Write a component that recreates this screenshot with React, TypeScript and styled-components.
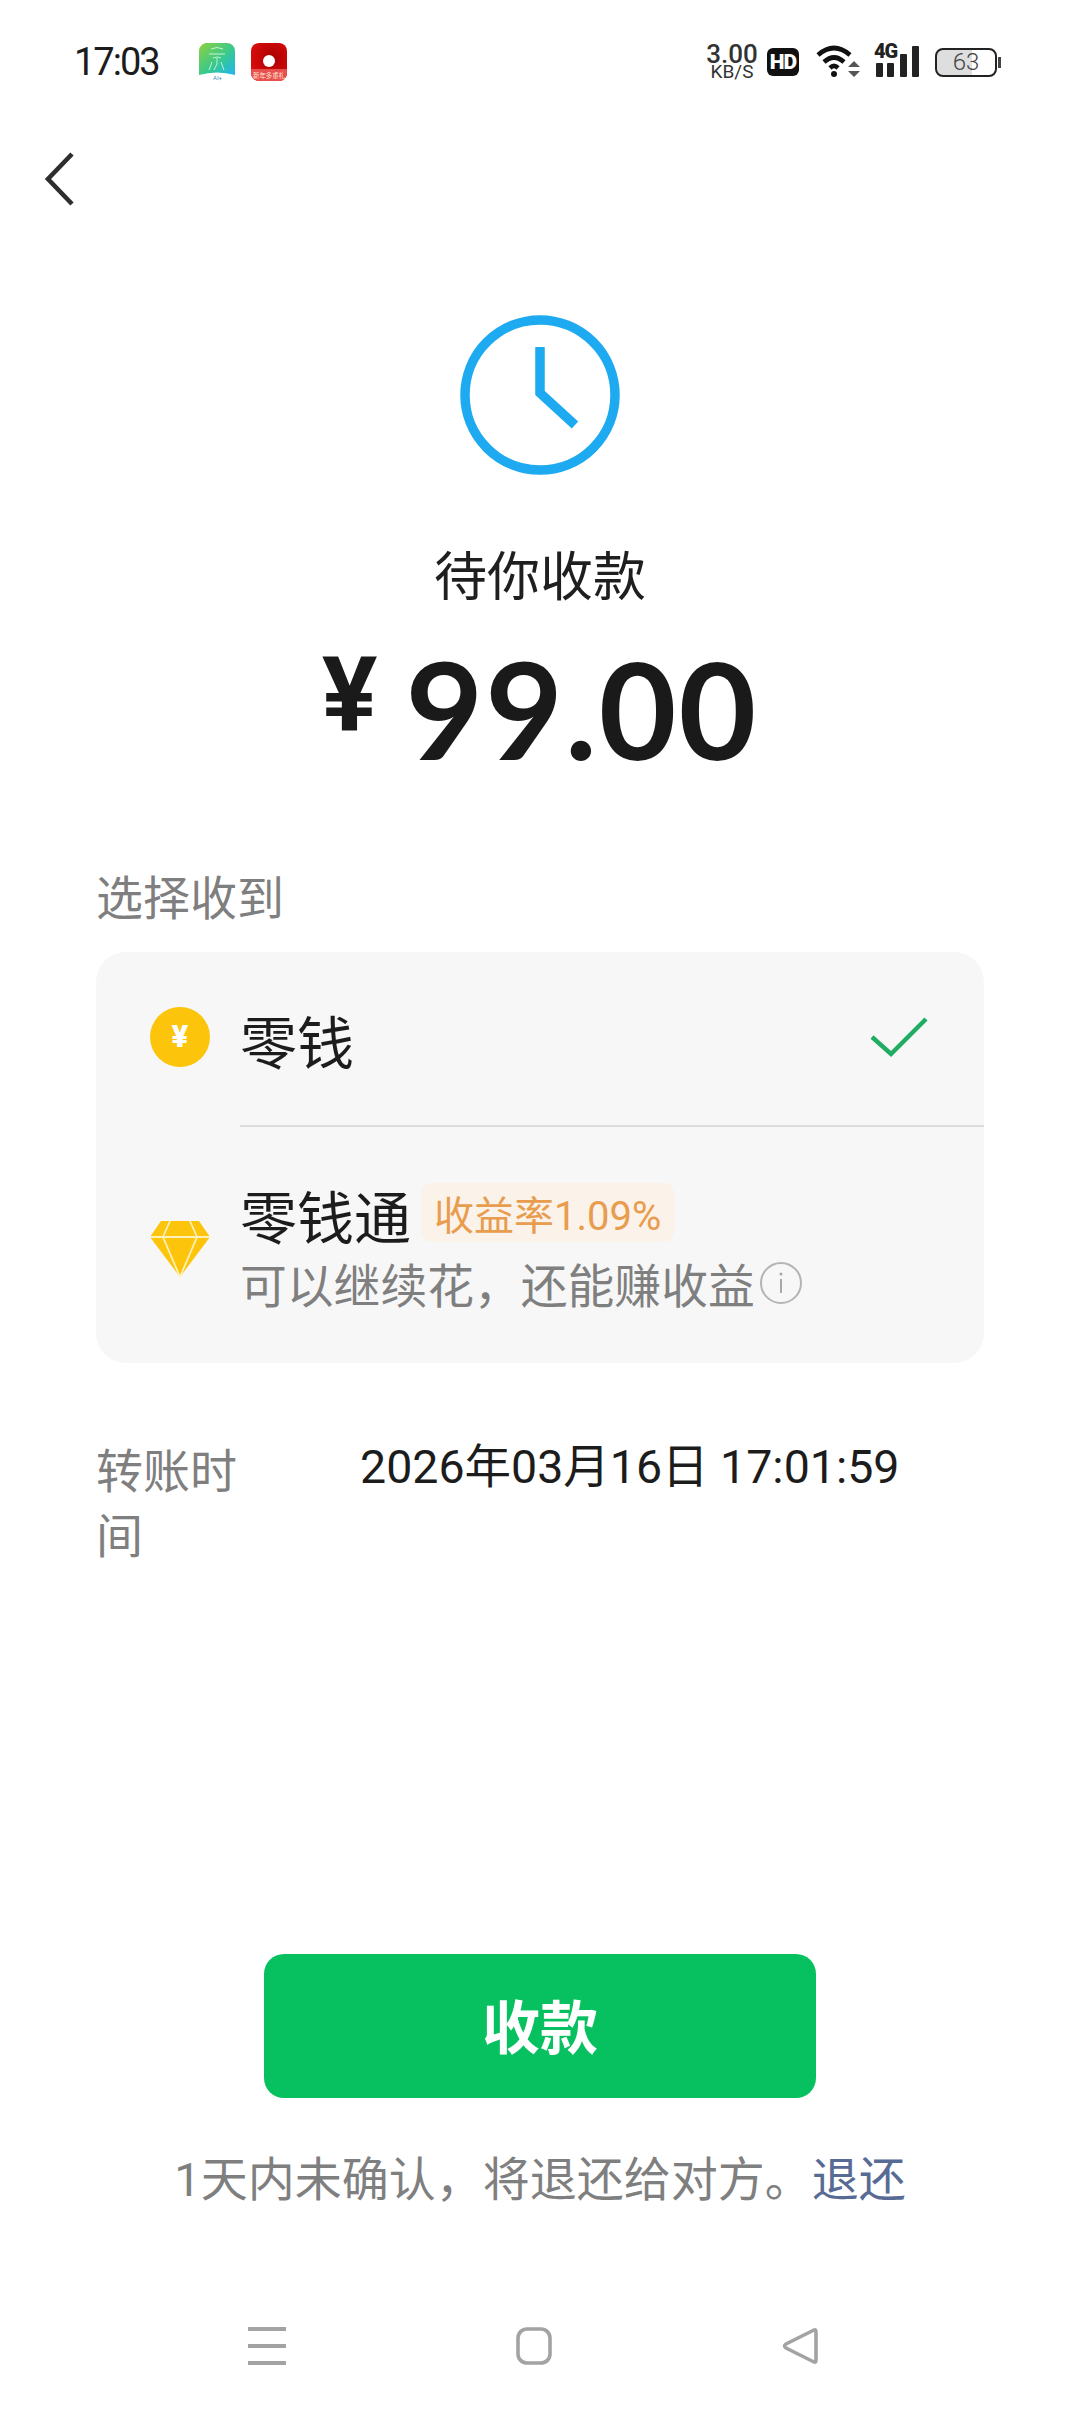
import React from 'react'
import styled, { createGlobalStyle } from 'styled-components'

const CJK = `"Noto Sans CJK SC", "Noto Sans", sans-serif`
const LATIN_CJK = `Roboto, "Noto Sans CJK SC", sans-serif`

const GlobalStyle = createGlobalStyle`
  html, body {
    margin: 0;
    padding: 0;
    background: #fff;
  }
  body {
    font-family: ${LATIN_CJK};
    color: #1a1a1a;
  }
`

const Page = styled.div`
  width: 1080px;
  height: 2412px;
  display: flex;
  flex-direction: column;
  overflow: hidden;
  background: #fff;
`

const StatusBar = styled.div`
  height: 80px;
  margin-top: 22px;
  padding: 0 79px 0 74px;
  display: flex;
  align-items: center;
  justify-content: space-between;
`

const StatusLeft = styled.div`
  display: flex;
  align-items: center;
`

const Clock = styled.span`
  font-size: 38px;
  line-height: 1;
  width: 125px;
  letter-spacing: -2px;
  color: #1c1c1c;
`

const AppIcon = styled.svg`
  width: 37px;
  height: 38px;
  margin-right: 15px;
`

const StatusRight = styled.div`
  display: flex;
  align-items: center;
`

const Speed = styled.div`
  display: flex;
  flex-direction: column;
  align-items: center;
  width: 52px;
  color: #333;
  margin-right: 9px;
`

const SpeedValue = styled.span`
  font-size: 26px;
  line-height: 20px;
  font-weight: 500;
`

const SpeedUnit = styled.span`
  font-size: 19px;
  line-height: 16px;
`

const HdBadge = styled.span`
  width: 32px;
  height: 28px;
  border-radius: 6px;
  background: #111;
  color: #fff;
  font-size: 21px;
  font-weight: 900;
  line-height: 28px;
  text-align: center;
  letter-spacing: -1px;
  margin-right: 17px;
`

const WifiIcon = styled.svg`
  width: 46px;
  height: 36px;
  margin-right: 12px;
`

const SignalBox = styled.div`
  width: 46px;
  height: 36px;
  position: relative;
  margin-right: 15px;
`

const SignalLabel = styled.span`
  position: absolute;
  left: 0;
  top: -3px;
  font-size: 20px;
  line-height: 20px;
  font-weight: 900;
  letter-spacing: -1px;
  color: #222;
`

const SignalBars = styled.svg`
  width: 46px;
  height: 36px;
`

const Battery = styled.div`
  width: 58px;
  height: 25px;
  border: 2.5px solid #222;
  border-radius: 8px;
  box-sizing: content-box;
  overflow: hidden;
  display: flex;
  align-items: center;
  justify-content: center;
  font-size: 24px;
  font-weight: 300;
  color: #444;
  background: linear-gradient(to right, #dedede 60%, #fff 60%);
`

const BatteryCap = styled.span`
  width: 3px;
  height: 11px;
  margin-left: 1px;
  background: #444;
`

const Header = styled.div`
  height: 213px;
  padding: 49px 0 0 44px;
  box-sizing: border-box;
`

const BackIcon = styled.svg`
  display: block;
  width: 30px;
  height: 56px;
`

const Hero = styled.div`
  display: flex;
  flex-direction: column;
  align-items: center;
`

const ClockIcon = styled.svg`
  width: 160px;
  height: 160px;
`

const HeroTitle = styled.div`
  margin-top: 62px;
  font-family: ${CJK};
  font-size: 53px;
  line-height: 72px;
  color: #1f1f1f;
`

const Amount = styled.div`
  margin-top: 20px;
  height: 160px;
  display: flex;
  align-items: center;
  justify-content: center;
  color: #1a1a1a;
`

const Yen = styled.span`
  font-family: Roboto, sans-serif;
  font-size: 104px;
  font-weight: 700;
  line-height: 1;
  margin-right: 28px;
  margin-bottom: 28px;
`

const Digits = styled.span`
  font-family: Lato, Roboto, sans-serif;
  font-size: 134px;
  font-weight: 700;
  line-height: 160px;
  letter-spacing: 2px;
`

const Main = styled.div`
  margin-top: 76px;
  padding: 0 96px;
  display: flex;
  flex-direction: column;
`

const SectionLabel = styled.div`
  font-family: ${CJK};
  font-size: 47px;
  line-height: 60px;
  color: #7f7f7f;
`

const Card = styled.div`
  margin-top: 27px;
  background: #f7f7f7;
  border-radius: 30px;
  overflow: hidden;
`

const Option = styled.div<{ $height: number }>`
  display: flex;
  height: ${({ $height }) => $height}px;
`

const OptionIcon = styled.div`
  width: 144px;
  padding-left: 54px;
  box-sizing: border-box;
  display: flex;
  align-items: center;
`

const OptionBody = styled.div<{ $divider?: boolean }>`
  flex: 1;
  display: flex;
  align-items: center;
  justify-content: space-between;
  padding-right: 56px;
  border-bottom: ${({ $divider }) => ($divider ? '2px solid #dcdcdc' : 'none')};
`

const Coin = styled.div`
  width: 60px;
  height: 60px;
  margin-bottom: 6px;
  border-radius: 50%;
  background: #fcc40a;
  color: #fff;
  display: flex;
  align-items: center;
  justify-content: center;
  font-family: Roboto, sans-serif;
  font-size: 31px;
  font-weight: 900;
`

const Gem = styled.svg`
  width: 60px;
  height: 56px;
  margin-top: 8px;
`

const OptionTitle = styled.div`
  font-family: ${CJK};
  font-size: 57px;
  line-height: 70px;
  color: #1c1c1c;
`

const OptionStack = styled.div`
  display: flex;
  flex-direction: column;
  margin-top: 6px;
`

const TitleRow = styled.div`
  display: flex;
  align-items: center;
`

const Rate = styled.span`
  margin-left: 10px;
  height: 59px;
  margin-top: -3px;
  padding: 0 13px;
  display: flex;
  align-items: center;
  border-radius: 10px;
  background: #fbf2e9;
  color: #e89d4e;
  font-size: 40px;
  font-family: ${LATIN_CJK};
`

const OptionHint = styled.div`
  display: flex;
  align-items: center;
  font-family: ${CJK};
  font-size: 46.8px;
  line-height: 68px;
  color: #7f7f7f;
`

const InfoIcon = styled.svg`
  width: 44px;
  height: 44px;
  margin-left: 4px;
`

const CheckIcon = styled.svg`
  width: 58px;
  height: 42px;
  margin-top: -4px;
`

const DetailRow = styled.div`
  margin-top: 72px;
  display: grid;
  grid-template-columns: 141px 1fr;
  column-gap: 123px;
`

const DetailLabel = styled.div`
  font-family: ${CJK};
  font-size: 47px;
  line-height: 65px;
  color: #7f7f7f;
`

const DetailValue = styled.div`
  font-size: 46.5px;
  line-height: 65px;
  color: #1c1c1c;
  white-space: nowrap;
`

const Footer = styled.div`
  margin-top: auto;
  padding-bottom: 20px;
  display: flex;
  flex-direction: column;
  align-items: center;
`

const AcceptButton = styled.button`
  width: 552px;
  height: 144px;
  padding: 0 0 4px;
  border: 0;
  border-radius: 20px;
  background: #07c160;
  color: #fff;
  font-family: ${CJK};
  font-size: 58px;
  font-weight: 700;
`

const Notice = styled.div`
  margin-top: 48px;
  font-size: 47px;
  line-height: 68px;
  color: #7f7f7f;
  white-space: nowrap;
`

const NoticeLink = styled.a`
  color: #576b95;
`

const NavBar = styled.div`
  margin-top: 86px;
  height: 92px;
  width: 100%;
  padding: 0 261px 0 248px;
  box-sizing: border-box;
  display: flex;
  align-items: center;
  justify-content: space-between;
`

const NavIcon = styled.svg`
  width: 38px;
  height: 38px;
`

export default function App() {
  return (
    <Page>
      <GlobalStyle />
      <StatusBar>
        <StatusLeft>
          <Clock>17:03</Clock>
          <AppIcon viewBox="0 0 37 38">
            <defs>
              <linearGradient id="aiGrad" x1="0" y1="0" x2="1" y2="1">
                <stop offset="0" stopColor="#8fd13f" />
                <stop offset="0.55" stopColor="#38c98c" />
                <stop offset="1" stopColor="#1fb6f2" />
              </linearGradient>
            </defs>
            <path d="M9 0h19a8 8 0 0 1 8 8v24q-18-5-36 0V8a8 8 0 0 1 9-8z" fill="url(#aiGrad)" />
            <g fill="none" stroke="#e6fbe8" strokeWidth="0.8">
              <path d="M12 6q6-3 12 0M10 11h16M14 15q4-2 8 0M18 15v6M13 19l-3 8M18 21l-3 6M22 19l3 8" />
            </g>
            <text x="18.5" y="37" fontSize="6" textAnchor="middle" fill="#3a8fbf">AI+</text>
          </AppIcon>
          <AppIcon viewBox="0 0 37 38">
            <defs>
              <radialGradient id="redGrad" cx="0.6" cy="0.4" r="0.7">
                <stop offset="0" stopColor="#a80000" />
                <stop offset="1" stopColor="#e00d0d" />
              </radialGradient>
            </defs>
            <rect width="36" height="38" rx="8" fill="url(#redGrad)" />
            <path d="M0 26h36v4a8 8 0 0 1-8 8H8a8 8 0 0 1-8-8z" fill="#e8504f" />
            <circle cx="18" cy="18" r="6" fill="#fff" />
            <text x="18" y="35" fontSize="6.4" textAnchor="middle" fill="#ffe7d0" fontFamily={CJK}>新年多重礼</text>
          </AppIcon>
        </StatusLeft>
        <StatusRight>
          <Speed>
            <SpeedValue>3.00</SpeedValue>
            <SpeedUnit>KB/S</SpeedUnit>
          </Speed>
          <HdBadge>HD</HdBadge>
          <WifiIcon viewBox="0 0 46 36">
            <path d="M2 11q16-14 32 0M8 18q10-9 20 0M14 24q4-4 8 0" fill="none" stroke="#111" strokeWidth="4.6" />
            <circle cx="18" cy="30" r="3" fill="#111" />
            <path d="M38 17l6 6H32zM38 33l6-6H32z" fill="#555" />
          </WifiIcon>
          <SignalBox>
            <SignalLabel>4G</SignalLabel>
            <SignalBars viewBox="0 0 46 36">
              <rect x="2" y="19" width="7" height="14" rx="1" fill="#222" />
              <rect x="13" y="19" width="7" height="14" rx="1" fill="#222" />
              <rect x="26" y="10" width="7" height="23" rx="1" fill="#222" />
              <rect x="38" y="2" width="7" height="31" rx="1" fill="#222" />
            </SignalBars>
          </SignalBox>
          <Battery>63</Battery>
          <BatteryCap />
        </StatusRight>
      </StatusBar>

      <Header>
        <BackIcon viewBox="0 0 30 56">
          <path d="M28 3L4 28l24 25" fill="none" stroke="#2e2e2e" strokeWidth="4.6" />
        </BackIcon>
      </Header>

      <Hero>
        <ClockIcon viewBox="0 0 160 160">
          <circle cx="80" cy="80" r="75" fill="none" stroke="#1eaaf1" strokeWidth="9.5" />
          <path d="M80 32v46l35 32" fill="none" stroke="#1eaaf1" strokeWidth="9.5" />
        </ClockIcon>
        <HeroTitle>待你收款</HeroTitle>
        <Amount>
          <Yen>¥</Yen>
          <Digits>99.00</Digits>
        </Amount>
      </Hero>

      <Main>
        <SectionLabel>选择收到</SectionLabel>
        <Card>
          <Option $height={175}>
            <OptionIcon>
              <Coin>¥</Coin>
            </OptionIcon>
            <OptionBody $divider>
              <OptionTitle>零钱</OptionTitle>
              <CheckIcon viewBox="0 0 58 42">
                <path d="M2 21l19 17L56 3" fill="none" stroke="#1fad63" strokeWidth="4.4" />
              </CheckIcon>
            </OptionBody>
          </Option>
          <Option $height={236}>
            <OptionIcon>
              <Gem viewBox="0 0 60 56">
                <path d="M11 0h38l11 16-30 40L0 16z" fill="#fcc40a" />
                <path d="M0 16h60M20 0l-7 16 17 40 17-40-7-16" fill="none" stroke="#fdf0b8" strokeWidth="1.8" />
              </Gem>
            </OptionIcon>
            <OptionBody>
              <OptionStack>
                <TitleRow>
                  <OptionTitle>零钱通</OptionTitle>
                  <Rate>收益率1.09%</Rate>
                </TitleRow>
                <OptionHint>
                  可以继续花，还能赚收益
                  <InfoIcon viewBox="0 0 44 44">
                    <circle cx="22" cy="22" r="20" fill="none" stroke="#b4b4b4" strokeWidth="2" />
                    <path d="M22 18v14" stroke="#a8a8a8" strokeWidth="2" />
                    <circle cx="22" cy="13" r="1.5" fill="#a8a8a8" />
                  </InfoIcon>
                </OptionHint>
              </OptionStack>
            </OptionBody>
          </Option>
        </Card>
        <DetailRow>
          <DetailLabel>转账时间</DetailLabel>
          <DetailValue>2026年03月16日 17:01:59</DetailValue>
        </DetailRow>
      </Main>

      <Footer>
        <AcceptButton>收款</AcceptButton>
        <Notice>
          1天内未确认，将退还给对方。<NoticeLink>退还</NoticeLink>
        </Notice>
        <NavBar>
          <NavIcon viewBox="0 0 38 38">
            <path d="M0 2h38M0 19h38M0 36h38" stroke="#a3a3a3" strokeWidth="4" />
          </NavIcon>
          <NavIcon viewBox="0 0 38 38">
            <rect x="3" y="2" width="32" height="34" rx="9" fill="none" stroke="#a3a3a3" strokeWidth="3.6" />
          </NavIcon>
          <NavIcon viewBox="0 0 38 38">
            <path d="M33 3L5 17q-3 2 0 4l28 14q2 1 2-2V5q0-3-2-2z" fill="none" stroke="#a3a3a3" strokeWidth="3.6" />
          </NavIcon>
        </NavBar>
      </Footer>
    </Page>
  )
}
